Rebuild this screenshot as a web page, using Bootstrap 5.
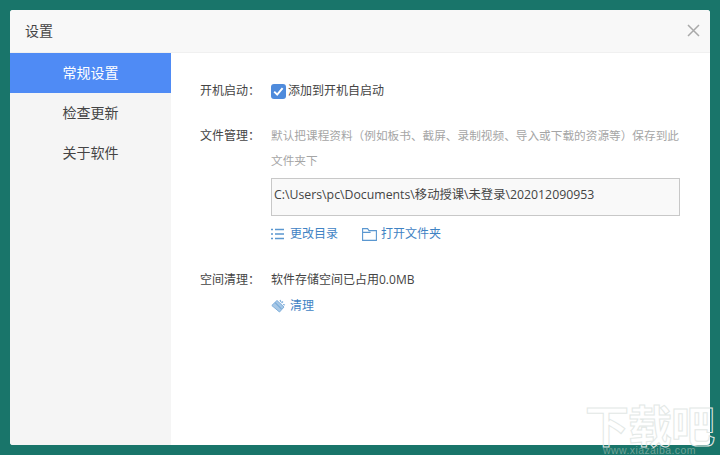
<!DOCTYPE html>
<html lang="zh"><head><meta charset="utf-8"><title>设置</title>
<link rel="stylesheet" href="https://cdn.jsdelivr.net/npm/bootstrap@5.3.0/dist/css/bootstrap.min.css">
<style>
html,body{height:455px;overflow:hidden}
body{background:#19756a;padding:10px;font-family:"Open Sans","Noto Sans CJK SC",sans-serif;font-size:12px;color:#444;position:relative}
.win{width:700px;height:435px;background:#fff;border-radius:3px;overflow:hidden}
.win-head{height:43px;background:#f8f8f8;border-bottom:1px solid #f0f0f0;padding:0 10px 2px 15px;font-size:14px;color:#444}
.side{width:161px;background:#f5f5f5}
.side-item{height:40px;font-size:14px;color:#444;background:transparent;border:0;width:100%;border-radius:0;padding:0 0 2px}
.side-item.on,.side-item.on:hover{background:#4f8bf5;color:#fff}
.main{padding:28px 30px 0 29px;width:539px}
.lab{width:71px;flex:none;white-space:nowrap}
.line{line-height:20px}
.hint{color:#a5a5a5;line-height:25px;margin-top:-3px;width:412px;font-size:11.66px}
.pathbox{width:409px;height:38px;background:#f9f9f9;border:1px solid #c8c8c8;padding:6px 2px;line-height:20px;margin-top:5px;white-space:nowrap;font-size:12.3px}
.act{color:#3f83c4;text-decoration:none;line-height:20px}
.tick{width:15px;height:15px;border-radius:3px;background:#4f8bdc;margin-right:2px}
.wm{position:absolute;right:6px;bottom:-1px;text-align:center;pointer-events:none;line-height:1}
.wm-a{font-family:"Noto Sans CJK SC",sans-serif;font-size:44px;font-weight:700;color:transparent;-webkit-text-stroke:1px #e3e8e6;letter-spacing:-1px;display:block;height:43px}
.wm-b{font-family:"Liberation Sans",sans-serif;font-size:10.5px;color:#6fa398;display:block;letter-spacing:.4px;height:11px}
</style></head><body>
<div class="win d-flex flex-column">
  <div class="win-head d-flex align-items-center justify-content-between flex-none">
    <span>设置</span>
    <svg width="13" height="13" viewBox="0 0 13 13" fill="none" stroke="#a9a9a9" stroke-width="1.5"><path d="M1 1l11 11M12 1L1 12"/></svg>
  </div>
  <div class="d-flex flex-grow-1">
    <div class="side">
      <button class="btn side-item on d-block">常规设置</button>
      <button class="btn side-item d-block">检查更新</button>
      <button class="btn side-item d-block">关于软件</button>
    </div>
    <div class="main">
      <div class="d-flex line">
        <div class="lab">开机启动：</div>
        <label class="d-flex align-items-center">
          <svg class="tick" viewBox="0 0 15 15"><path d="M3.2 7.6l3 3 5.4-6.4" fill="none" stroke="#fff" stroke-width="2"/></svg>
          添加到开机自启动
        </label>
      </div>
      <div class="d-flex" style="margin-top:25px">
        <div class="lab line">文件管理：</div>
        <div>
          <div class="hint">默认把课程资料（例如板书、截屏、录制视频、导入或下载的资源等）保存到此文件夹下</div>
          <div class="pathbox">C:\Users\pc\Documents\移动授课\未登录\202012090953</div>
          <div class="d-flex mt-2" style="gap:24px">
            <a class="act d-flex align-items-center" style="gap:5px" href="#">
              <svg width="14" height="12" viewBox="0 0 14 12" fill="none" stroke="#5a97d0" stroke-width="1.4"><path d="M0 1.500h2M4 1.500h9M0 6h2M4 6h9M0 10.500h2M4 10.500h9"/></svg>
              更改目录</a>
            <a class="act d-flex align-items-center" style="gap:4px" href="#">
              <svg width="15" height="13" viewBox="0 0 15 13" fill="none" stroke="#5a97d0" stroke-width="1.1"><path d="M.6 12.400V.6h5l1.400 2h7.400v9.800zM.6 4.400h8"/></svg>
              打开文件夹</a>
          </div>
        </div>
      </div>
      <div class="d-flex line" style="margin-top:26px">
        <div class="lab">空间清理：</div>
        <div>
          <div>软件存储空间已占用0.0MB</div>
          <a class="act d-flex align-items-center" style="gap:4px;margin-top:6px" href="#">
            <svg width="15" height="14" viewBox="0 0 15 14" fill="none" stroke="#7eaedb"><path d="M.8 6.500L6 1.500l7 6.500-4.500 5z" fill="#a8c8e6"/><path d="M4 3.500l6.500 6.500M9 1l1 2M12 2.500l-1.500 1.500M14 6l-2-.5" stroke-width="1.200"/></svg>
            清理</a>
        </div>
      </div>
    </div>
  </div>
</div>
<div class="wm"><span class="wm-a">下载吧</span><span class="wm-b">www.xiazaiba.com</span></div>
<script src="https://cdn.jsdelivr.net/npm/bootstrap@5.3.0/dist/js/bootstrap.bundle.min.js"></script>
</body></html>
